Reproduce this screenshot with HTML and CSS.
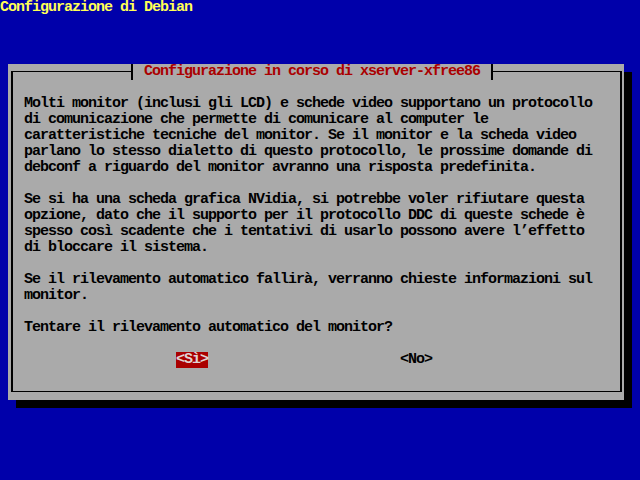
FILE: index.html
```html
<!DOCTYPE html>
<html lang="it">
<head>
<meta charset="utf-8">
<title>Configurazione di Debian</title>
<link rel="stylesheet" href="styles.css">
</head>
<body>
<div class="screen">
  <div class="backtitle">Configurazione di Debian</div>
  <div class="dialog">
    <div class="frame">
      <div class="title">Configurazione in corso di xserver-xfree86</div>
      <p class="para">Molti monitor (inclusi gli LCD) e schede video supportano un protocollo<br>di comunicazione che permette di comunicare al computer le<br>caratteristiche tecniche del monitor. Se il monitor e la scheda video<br>parlano lo stesso dialetto di questo protocollo, le prossime domande di<br>debconf a riguardo del monitor avranno una risposta predefinita.</p>
      <p class="para">Se si ha una scheda grafica NVidia, si potrebbe voler rifiutare questa<br>opzione, dato che il supporto per il protocollo DDC di queste schede è<br>spesso così scadente che i tentativi di usarlo possono avere l’effetto<br>di bloccare il sistema.</p>
      <p class="para">Se il rilevamento automatico fallirà, verranno chieste informazioni sul<br>monitor.</p>
      <p class="para">Tentare il rilevamento automatico del monitor?</p>
      <div class="buttons">
        <span class="btn btn-active">&lt;Sì&gt;</span>
        <span class="btn">&lt;No&gt;</span>
      </div>
    </div>
  </div>
</div>
</body>
</html>
```
FILE: styles.css
```css
html, body {
  margin: 0;
  padding: 0;
  background: #0000aa;
}

.screen {
  width: 640px;
  height: 480px;
  background: #0000aa;
  font-family: "Liberation Mono", "DejaVu Sans Mono", monospace;
  font-size: 15px;
  font-weight: bold;
  letter-spacing: -1px;
  line-height: 16px;
  overflow: hidden;
}

.backtitle {
  height: 16px;
  color: #ffff55;
  white-space: pre;
}

.dialog {
  margin: 48px 0 0 8px;
  width: 616px;
  height: 336px;
  background: #aaaaaa;
  box-shadow: 8px 8px 0 #000000;
  padding: 7px 2px 8px 3px;
  box-sizing: border-box;
}

.frame {
  position: relative;
  height: 100%;
  box-sizing: border-box;
  border: 2px solid #000000;
  border-top-width: 1px;
  border-bottom-width: 1px;
  padding: 24px 0 0 11px;
  color: #000000;
}

.title {
  position: absolute;
  top: -8px;
  left: 118px;
  height: 16px;
  padding: 0 11px;
  background: #aaaaaa;
  border-left: 2px solid #000000;
  border-right: 2px solid #000000;
  color: #aa0000;
  white-space: pre;
}

.para {
  margin: 0 0 16px 0;
  white-space: nowrap;
}

.buttons {
  display: flex;
  gap: 192px;
  padding-left: 152px;
  height: 16px;
}

.btn {
  display: block;
  height: 16px;
  white-space: pre;
}

.btn-active {
  background: #aa0000;
  color: #e0d4d4;
}
```
